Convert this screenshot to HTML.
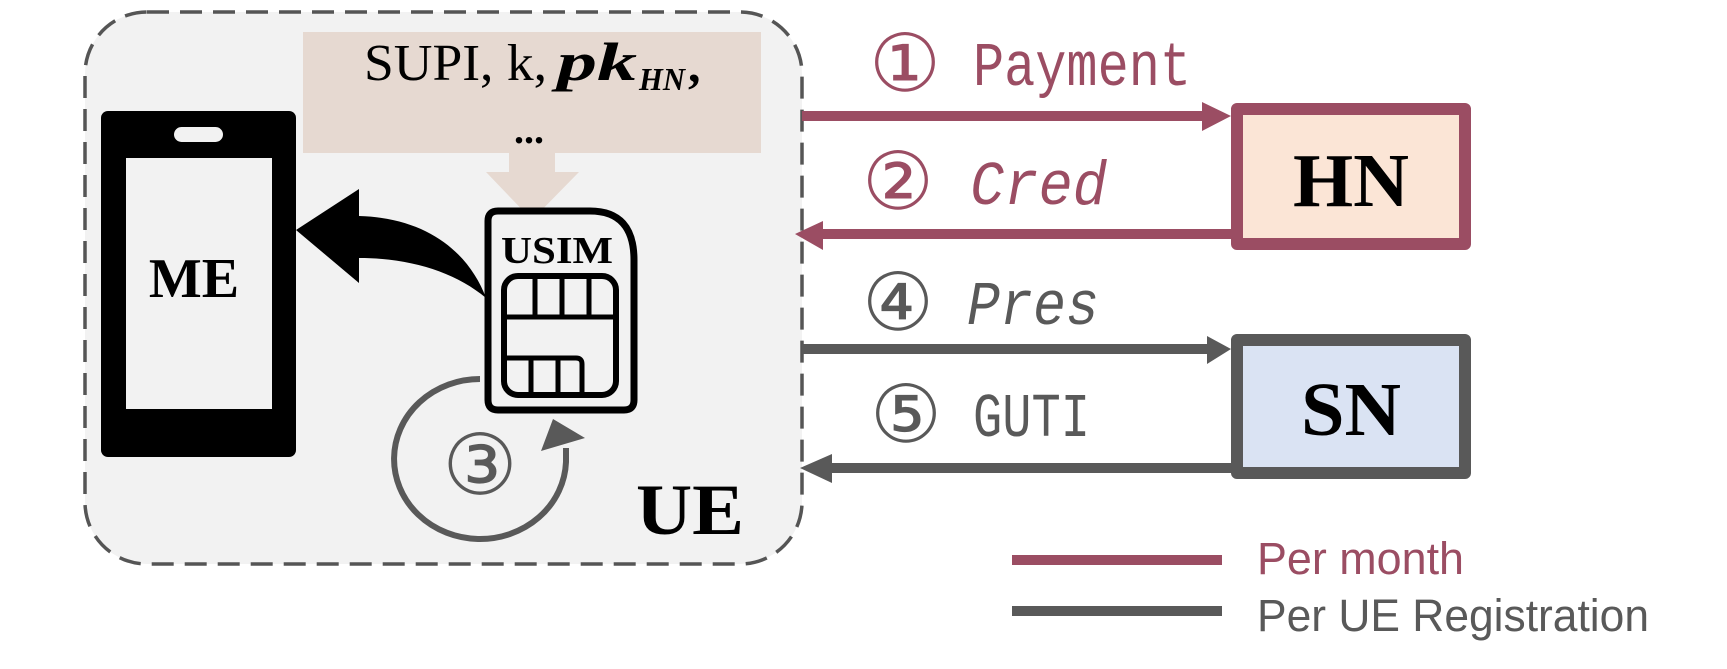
<!DOCTYPE html>
<html><head><meta charset="utf-8"><style>
html,body{margin:0;padding:0;background:#fff;}
svg{display:block;}
</style></head><body>
<svg width="1727" height="669" viewBox="0 0 1727 669" xmlns="http://www.w3.org/2000/svg">
<rect x="85" y="12" width="717" height="552" rx="62" fill="#f2f2f2" stroke="#555" stroke-width="3.5" stroke-dasharray="22 11"/>
<rect x="303" y="32" width="458" height="121" fill="#e6d9d1"/>
<text x="364" y="80" font-family="Liberation Serif, serif" font-size="52" fill="#000" textLength="183" lengthAdjust="spacingAndGlyphs">SUPI, k,</text>
<text x="557" y="80" font-family="Liberation Serif, serif" font-size="54" font-weight="bold" font-style="italic" fill="#000" textLength="80" lengthAdjust="spacingAndGlyphs">pk</text>
<text x="639" y="90" font-family="Liberation Serif, serif" font-size="32" font-weight="bold" font-style="italic" fill="#000" textLength="46" lengthAdjust="spacingAndGlyphs">HN</text>
<text x="688" y="82" font-family="Liberation Serif, serif" font-size="50" font-weight="bold" fill="#000">,</text>
<text x="514" y="143" font-family="Liberation Serif, serif" font-size="40" font-weight="bold" fill="#000">...</text>
<polygon points="509,153 555,153 555,172 579,172 532,220 486,172 509,172" fill="#e6d9d1"/>
<rect x="101" y="111" width="195" height="346" rx="7" fill="#000"/>
<rect x="126" y="158" width="146" height="251" fill="#f2f2f2"/>
<rect x="174" y="127" width="49" height="15" rx="7.5" fill="#f2f2f2"/>
<text x="194" y="297" text-anchor="middle" font-family="Liberation Serif, serif" font-size="56" font-weight="bold" fill="#000">ME</text>
<path d="M486,298 C470,255 430,218 359,216 L359,189 L296,230 L359,283 L359,258 C410,258 455,272 486,298 Z" fill="#000"/>
<path d="M498,211 L590,211 Q634,211 634,260 L634,400 Q634,410 624,410 L498,410 Q488,410 488,400 L488,221 Q488,211 498,211 Z" fill="#f2f2f2" stroke="#000" stroke-width="7"/>
<text x="557" y="263" text-anchor="middle" font-family="Liberation Serif, serif" font-size="38" font-weight="bold" fill="#000" textLength="112" lengthAdjust="spacingAndGlyphs">USIM</text>
<rect x="504" y="276" width="112" height="119" rx="14" fill="none" stroke="#000" stroke-width="6"/>
<line x1="504" y1="317" x2="616" y2="317" stroke="#000" stroke-width="5"/>
<line x1="535" y1="276" x2="535" y2="317" stroke="#000" stroke-width="5"/>
<line x1="562" y1="276" x2="562" y2="317" stroke="#000" stroke-width="5"/>
<line x1="589" y1="276" x2="589" y2="317" stroke="#000" stroke-width="5"/>
<path d="M504,358 L576,358 Q582,358 582,364 L582,395" fill="none" stroke="#000" stroke-width="5"/>
<line x1="531" y1="358" x2="531" y2="395" stroke="#000" stroke-width="5"/>
<line x1="558" y1="358" x2="558" y2="395" stroke="#000" stroke-width="5"/>
<path d="M480,379 A86,80 0 1,0 566,462 L566,448" fill="none" stroke="#595959" stroke-width="6"/>
<polygon points="541,451 553,419 585,438 " fill="#595959"/>
<text x="480" y="494" text-anchor="middle" font-family="DejaVu Sans, sans-serif" font-size="84" fill="#595959">③</text>
<text x="690" y="534" text-anchor="middle" font-family="Liberation Serif, serif" font-size="72" font-weight="bold" fill="#000" textLength="108" lengthAdjust="spacingAndGlyphs">UE</text>
<line x1="802" y1="116" x2="1205" y2="116" stroke="#9b4d63" stroke-width="10"/>
<polygon points="1202,102 1231,116 1202,131" fill="#9b4d63"/>
<line x1="1231" y1="234" x2="820" y2="234" stroke="#9b4d63" stroke-width="10"/>
<polygon points="823,221 795,234 823,250" fill="#9b4d63"/>
<line x1="802" y1="349" x2="1210" y2="349" stroke="#595959" stroke-width="10"/>
<polygon points="1207,336 1231,349 1207,364" fill="#595959"/>
<line x1="1231" y1="468" x2="828" y2="468" stroke="#595959" stroke-width="10"/>
<polygon points="832,454 800,468 832,483" fill="#595959"/>
<rect x="1237" y="109" width="228" height="135" fill="#fbe5d6" stroke="#9b4d63" stroke-width="12" stroke-linejoin="round"/>
<text x="1351" y="206" text-anchor="middle" font-family="Liberation Serif, serif" font-size="76" font-weight="bold" fill="#000" textLength="116" lengthAdjust="spacingAndGlyphs">HN</text>
<rect x="1237" y="340" width="228" height="133" fill="#dae3f3" stroke="#595959" stroke-width="12" stroke-linejoin="round"/>
<text x="1351" y="435" text-anchor="middle" font-family="Liberation Serif, serif" font-size="76" font-weight="bold" fill="#000" textLength="100" lengthAdjust="spacingAndGlyphs">SN</text>
<text x="905" y="91" text-anchor="middle" font-family="DejaVu Sans, sans-serif" font-size="80" fill="#9b4d63">①</text>
<text x="973" y="85" font-family="Liberation Mono, monospace" font-size="62" fill="#9b4d63" textLength="218" lengthAdjust="spacingAndGlyphs">Payment</text>
<text x="898" y="209" text-anchor="middle" font-family="DejaVu Sans, sans-serif" font-size="80" fill="#9b4d63">②</text>
<text x="970" y="204" font-family="Liberation Mono, monospace" font-size="62" font-style="italic" fill="#9b4d63" textLength="137" lengthAdjust="spacingAndGlyphs">Cred</text>
<text x="898" y="330" text-anchor="middle" font-family="DejaVu Sans, sans-serif" font-size="80" fill="#595959">④</text>
<text x="967" y="324" font-family="Liberation Mono, monospace" font-size="62" font-style="italic" fill="#595959" textLength="132" lengthAdjust="spacingAndGlyphs">Pres</text>
<text x="906" y="442" text-anchor="middle" font-family="DejaVu Sans, sans-serif" font-size="80" fill="#595959">⑤</text>
<text x="973" y="436" font-family="Liberation Mono, monospace" font-size="62" fill="#595959" textLength="117" lengthAdjust="spacingAndGlyphs">GUTI</text>
<line x1="1012" y1="560" x2="1222" y2="560" stroke="#9b4d63" stroke-width="10"/>
<line x1="1012" y1="611" x2="1222" y2="611" stroke="#595959" stroke-width="10"/>
<text x="1257" y="574" font-family="Liberation Sans, sans-serif" font-size="45" fill="#9b4d63" textLength="207" lengthAdjust="spacingAndGlyphs">Per month</text>
<text x="1257" y="631" font-family="Liberation Sans, sans-serif" font-size="45" fill="#595959" textLength="392" lengthAdjust="spacingAndGlyphs">Per UE Registration</text>
</svg>
</body></html>
